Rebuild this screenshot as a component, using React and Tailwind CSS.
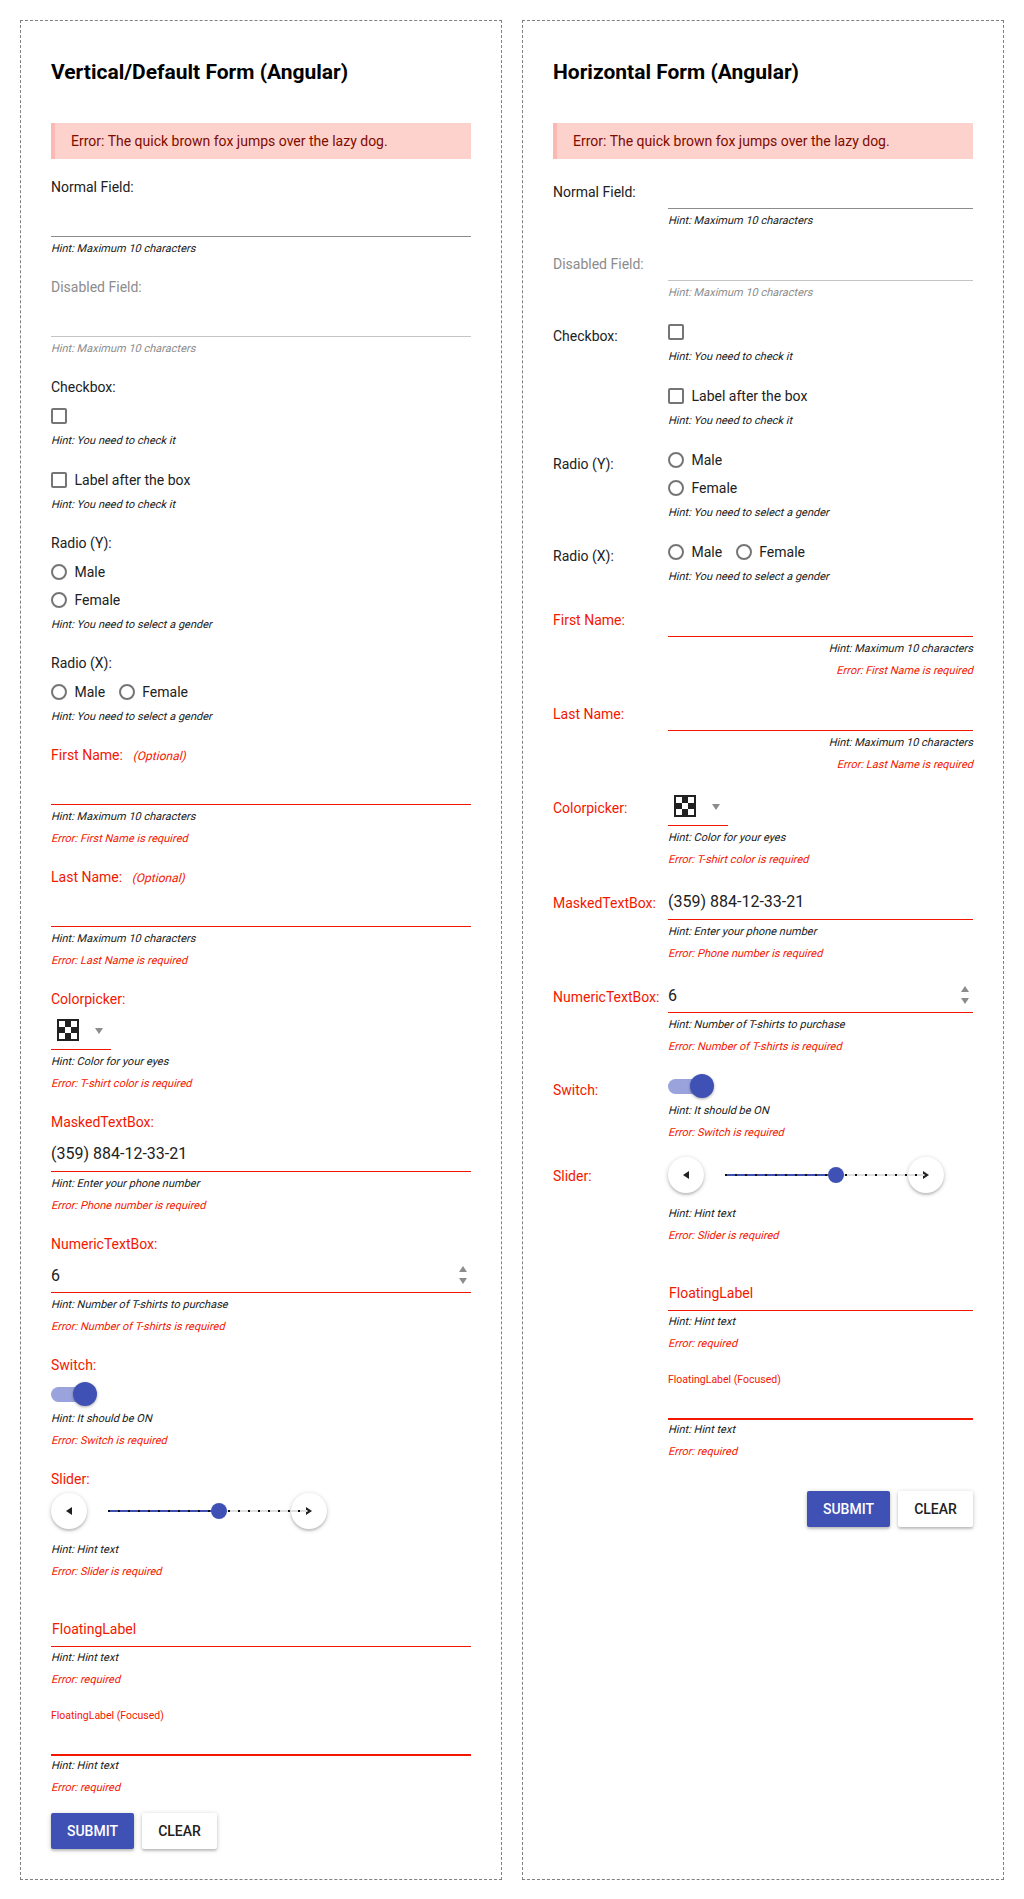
import React from "react";

const INK = "text-[#212121]";
const RED = "text-[#f31700]";

function Note({ children, tone, end }) {
  return (
    <div
      className={`h-[22px] origin-[0_15px] skew-x-[-14deg] text-[11px] leading-6 ${tone} ${end ? "text-right" : ""}`}
    >
      {children}
    </div>
  );
}

function Field({ horizontal, label, optional, disabled, invalid, hint, error, end, children }) {
  const tone = invalid ? RED : disabled ? "text-[#8c8c8c]" : INK;
  return (
    <div className={horizontal ? "mb-[10px] flex" : "mb-[18px]"}>
      {horizontal ? (
        <label className={`w-[115px] shrink-0 pt-[13px] text-sm leading-5 whitespace-nowrap ${tone}`}>{label}</label>
      ) : label ? (
        <label className={`flex h-5 text-sm leading-5 ${tone}`}>
          {label}
          {optional && (
            <span className="ml-[10px] origin-[0_14px] skew-x-[-14deg] text-xs leading-[22px]">(Optional)</span>
          )}
        </label>
      ) : null}
      <div className="min-w-0 flex-1">
        {children}
        <Note tone={disabled ? "text-[#8c8c8c]" : INK} end={end}>{hint}</Note>
        {error && <Note tone={RED} end={end}>{error}</Note>}
      </div>
    </div>
  );
}

function TextInput({ value, line }) {
  return (
    <div className={`h-10 border-b pt-3 text-base leading-5 ${INK} ${line}`}>{value}</div>
  );
}

function NumericInput({ value }) {
  return (
    <div className={`flex h-[39px] justify-between border-b border-[#f31700] pt-3 pr-1 text-base leading-5 ${INK}`}>
      <span>{value}</span>
      <svg width="8" height="18" viewBox="0 0 8 18" className="fill-[#8c8c8c]">
        <path d="M4 0 8 6H0Z" />
        <path d="M0 12h8l-4 6Z" />
      </svg>
    </div>
  );
}

function Checkbox({ text, tight }) {
  return (
    <div className={`flex ${tight ? "h-6 pt-[3px]" : "h-8 pt-[11px]"}`}>
      <span className="size-4 rounded-[2px] border-2 border-[#757575]" />
      {text && <span className={`-mt-0.5 ml-[7.5px] text-sm leading-5 ${INK}`}>{text}</span>}
    </div>
  );
}

function Radio({ text }) {
  return (
    <div className="flex h-4">
      <span className="size-4 rounded-full border-2 border-[#757575]" />
      <span className={`-mt-0.5 ml-[7.5px] text-sm leading-5 ${INK}`}>{text}</span>
    </div>
  );
}

function RadioGroup({ row }) {
  return (
    <div className={row ? "flex h-8 gap-[13.6px] pt-[11px]" : "flex h-[60px] flex-col gap-3 pt-[11px]"}>
      <Radio text="Male" />
      <Radio text="Female" />
    </div>
  );
}

function ColorPicker() {
  return (
    <div className="flex h-[41px] w-[60px] border-b border-[#f31700] pt-[10px] pl-[6px]">
      <svg width="22" height="22" viewBox="0 0 22 22">
        <path className="fill-[#212121]" d="M0 0h22v22H0Z" />
        <path className="fill-white" d="M2 2h6v6H2ZM14 2h6v6h-6ZM8 8h6v6H8ZM2 14h6v6H2ZM14 14h6v6h-6Z" />
      </svg>
      <svg width="8" height="6" viewBox="0 0 8 6" className="mt-[9px] ml-4 fill-[#8c8c8c]">
        <path d="M0 0h8l-4 6Z" />
      </svg>
    </div>
  );
}

function Switch() {
  return (
    <div className="flex h-8 pt-[7px]">
      <div className="relative h-6 w-[46px]">
        <div className="mt-[5px] h-[15px] w-10 rounded-full bg-[#9aa3dc]" />
        <div className="absolute top-0 right-0 size-6 rounded-full bg-[#3f51b5] shadow-[0_1px_3px_rgba(0,0,0,0.35)]" />
      </div>
    </div>
  );
}

const TICKS = Array.from({ length: 20 }, (_, i) => i * 10);

function Slider() {
  const round =
    "flex size-9 items-center justify-center rounded-full bg-white shadow-[0_1px_5px_rgba(0,0,0,0.2),0_2px_2px_rgba(0,0,0,0.14)]";
  return (
    <div className="h-[49px] pt-1">
      <div className="relative flex w-[276px] justify-between">
        <div className={round}>
          <svg width="6" height="8" viewBox="0 0 6 8" className="fill-[#212121]">
            <path d="M6 0v8L0 4Z" />
          </svg>
        </div>
        <div className={round}>
          <svg width="6" height="8" viewBox="0 0 6 8" className="fill-[#212121]">
            <path d="M0 0v8l6-4Z" />
          </svg>
        </div>
        <svg width="204" height="16" viewBox="0 0 204 16" className="absolute top-[10px] left-[57px]">
          <path className="fill-[#e0e0e0]" d="M0 7h199.5v2H0Z" />
          <path className="fill-[#3f51b5]" d="M0 7h111v2H0Z" />
          {TICKS.map((x) => (
            <rect key={x} x={x} y="7" width="2" height="2" className="fill-[#111111]" />
          ))}
          <circle cx="111" cy="8" r="8" className="fill-[#3f51b5]" />
        </svg>
      </div>
    </div>
  );
}

function FloatingField({ focused }) {
  return (
    <div className="mb-[18px] last:mb-0">
      {focused ? (
        <div className={`-mb-0.5 h-12 border-b-2 border-[#f31700] text-[10.5px] leading-[15px] ${RED}`}>
          FloatingLabel (Focused)
        </div>
      ) : (
        <div className={`-mb-px h-[47px] border-b border-[#f31700] pt-[19px] pl-px text-sm leading-5 ${RED}`}>
          FloatingLabel
        </div>
      )}
      <Note tone={INK}>Hint: Hint text</Note>
      <Note tone={RED}>Error: required</Note>
    </div>
  );
}

function Buttons({ horizontal }) {
  const base =
    "flex h-9 items-center justify-center rounded-[2px] text-sm font-medium shadow-[0_1px_5px_rgba(0,0,0,0.2),0_2px_2px_rgba(0,0,0,0.14)]";
  return (
    <div className={`flex gap-2 ${horizontal ? "mt-[29px] justify-end" : "mt-[15px]"}`}>
      <button className={`${base} w-[83px] bg-[#3f51b5] text-white`}>SUBMIT</button>
      <button className={`${base} w-[75px] bg-white ${INK}`}>CLEAR</button>
    </div>
  );
}

function Form({ title, horizontal }) {
  const h = horizontal;
  const line = "border-[#f31700]";
  return (
    <form className="h-[1860px] w-[482px] border border-dashed border-[#808080] px-[30px] pt-[30px]">
      <h2 className="h-[72px] pt-[6px] text-[21px] leading-[30px] font-bold text-black">{title}</h2>
      <div
        className={`h-9 border-l-4 border-[#fcb9b3] bg-[#fdd1cc] pl-4 text-sm leading-9 text-[#7e0c00] ${h ? "mb-[10px]" : "mb-[18px]"}`}
      >
        Error: The quick brown fox jumps over the lazy dog.
      </div>
      <Field horizontal={h} label="Normal Field:" hint="Hint: Maximum 10 characters">
        <TextInput line="border-[#8c8c8c]" />
      </Field>
      <Field horizontal={h} label="Disabled Field:" disabled hint="Hint: Maximum 10 characters">
        <TextInput line="border-[#c5c5c5]" />
      </Field>
      <Field horizontal={h} label="Checkbox:" hint="Hint: You need to check it">
        <Checkbox />
      </Field>
      <Field horizontal={h} hint="Hint: You need to check it">
        <Checkbox text="Label after the box" tight={!h} />
      </Field>
      <Field horizontal={h} label="Radio (Y):" hint="Hint: You need to select a gender">
        <RadioGroup />
      </Field>
      <Field horizontal={h} label="Radio (X):" hint="Hint: You need to select a gender">
        <RadioGroup row />
      </Field>
      <Field horizontal={h} label="First Name:" optional invalid end={h} hint="Hint: Maximum 10 characters" error="Error: First Name is required">
        <TextInput line={line} />
      </Field>
      <Field horizontal={h} label="Last Name:" optional invalid end={h} hint="Hint: Maximum 10 characters" error="Error: Last Name is required">
        <TextInput line={line} />
      </Field>
      <Field horizontal={h} label="Colorpicker:" invalid hint="Hint: Color for your eyes" error="Error: T-shirt color is required">
        <ColorPicker />
      </Field>
      <Field horizontal={h} label="MaskedTextBox:" invalid hint="Hint: Enter your phone number" error="Error: Phone number is required">
        <TextInput line={line} value="(359) 884-12-33-21" />
      </Field>
      <Field horizontal={h} label="NumericTextBox:" invalid hint="Hint: Number of T-shirts to purchase" error="Error: Number of T-shirts is required">
        <NumericInput value="6" />
      </Field>
      <Field horizontal={h} label="Switch:" invalid hint="Hint: It should be ON" error="Error: Switch is required">
        <Switch />
      </Field>
      <Field horizontal={h} label="Slider:" invalid hint="Hint: Hint text" error="Error: Slider is required">
        <Slider />
      </Field>
      <div className={h ? "mt-[18px] ml-[115px]" : ""}>
        <FloatingField />
        <FloatingField focused />
      </div>
      <Buttons horizontal={h} />
    </form>
  );
}

export default function App() {
  return (
    <div className="flex h-[1899px] w-[1024px] gap-5 bg-white p-5 font-['Roboto',sans-serif]">
      <Form title="Vertical/Default Form (Angular)" />
      <Form title="Horizontal Form (Angular)" horizontal />
    </div>
  );
}
